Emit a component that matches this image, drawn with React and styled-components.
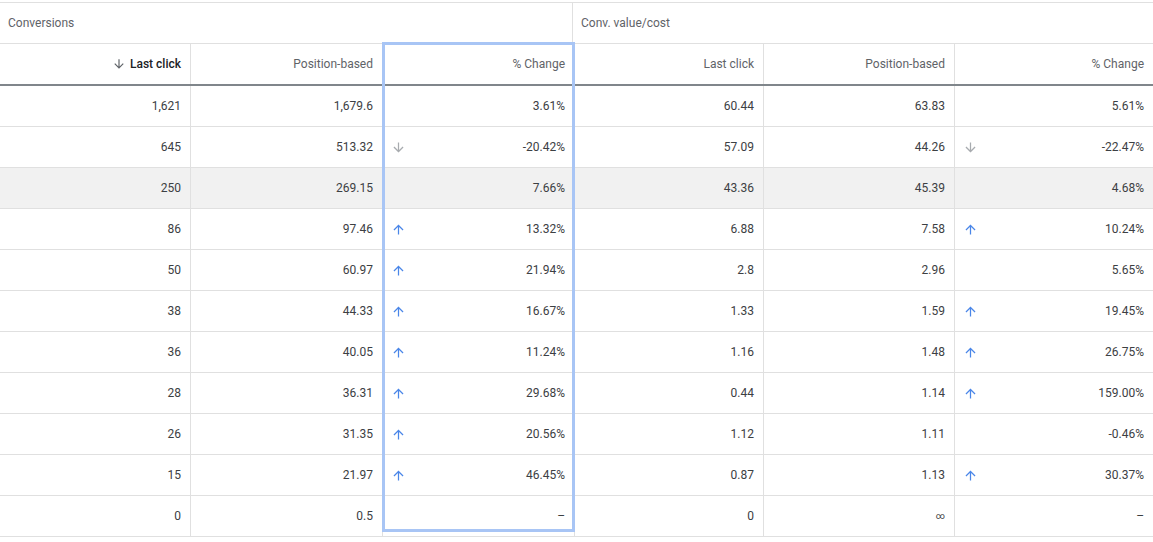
import React from 'react';
import styled, { createGlobalStyle } from 'styled-components';

const GlobalStyle = createGlobalStyle`
    html, body {
        margin: 0;
        padding: 0;
        background: #fff;
    }
    body {
        font-family: Roboto, "Liberation Sans", Arial, sans-serif;
        -webkit-font-smoothing: antialiased;
    }
`;

const COLUMNS = '191px 192px 192px 189px 191px 198px';

const Table = styled.div`
    position: relative;
    width: 1153px;
    padding-top: 2px;
`;

const GroupRow = styled.div`
    display: grid;
    grid-template-columns: 573px 1fr;
    border-top: 1px solid #e0e0e0;
    border-bottom: 1px solid #e0e0e0;
`;

const GroupCell = styled.div`
    height: 40px;
    display: flex;
    align-items: center;
    padding-left: 8px;
    font-size: 12px;
    color: #5f6368;
    border-right: ${p => p.$last ? 'none' : '1px solid #e0e0e0'};
`;

const HeaderRow = styled.div`
    display: grid;
    grid-template-columns: ${COLUMNS};
    border-bottom: 2px solid #80868b;
`;

const HeaderCell = styled.div`
    height: 40px;
    display: flex;
    align-items: center;
    justify-content: flex-end;
    gap: 4px;
    padding-right: 9px;
    font-size: 12px;
    color: ${p => p.$sorted ? '#202124' : '#5f6368'};
    font-weight: ${p => p.$sorted ? 500 : 400};
    border-right: ${p => p.$last ? 'none' : '1px solid #e0e0e0'};
`;

const Row = styled.div`
    display: grid;
    grid-template-columns: ${COLUMNS};
    border-bottom: 1px solid #e0e0e0;
    background: ${p => p.$hover ? '#f1f1f1' : '#fff'};
`;

const Cell = styled.div`
    height: 40px;
    display: flex;
    align-items: center;
    justify-content: ${p => p.$split ? 'space-between' : 'flex-end'};
    padding: 0 9px 0 ${p => p.$split ? '8px' : '0'};
    font-size: 12px;
    color: #3c4043;
    border-right: ${p => p.$last ? 'none' : '1px solid #e0e0e0'};
`;

const Infinity = styled.span`
    font-size: 9px;
`;

const Selection = styled.div`
    position: absolute;
    left: 382px;
    top: 42px;
    width: 193px;
    bottom: 5px;
    box-sizing: border-box;
    border: 3px solid #a8c5f5;
    pointer-events: none;
`;

const Page = styled.div`
    height: 542px;
    overflow: hidden;
`;

function Arrow({ dir, color, size = 15 }) {
    const d = dir === 'up'
        ? 'M4 12l1.41 1.41L11 7.83V20h2V7.83l5.58 5.59L20 12l-8-8-8 8z'
        : 'M20 12l-1.41-1.41L13 16.17V4h-2v12.17l-5.58-5.59L4 12l8 8 8-8z';
    return <svg width={size} height={size} viewBox="0 0 24 24"><path d={d} fill={color} /></svg>;
}

const trendIcon = (t) => {
    if (t === 'up') return <Arrow dir="up" color="#4a86e8" />;
    if (t === 'down') return <Arrow dir="down" color="#a8abaf" />;
    return <span />;
};

const rows = [
    ['1,621', '1,679.6', '3.61%', null, '60.44', '63.83', '5.61%', null],
    ['645', '513.32', '-20.42%', 'down', '57.09', '44.26', '-22.47%', 'down'],
    ['250', '269.15', '7.66%', null, '43.36', '45.39', '4.68%', null, true],
    ['86', '97.46', '13.32%', 'up', '6.88', '7.58', '10.24%', 'up'],
    ['50', '60.97', '21.94%', 'up', '2.8', '2.96', '5.65%', null],
    ['38', '44.33', '16.67%', 'up', '1.33', '1.59', '19.45%', 'up'],
    ['36', '40.05', '11.24%', 'up', '1.16', '1.48', '26.75%', 'up'],
    ['28', '36.31', '29.68%', 'up', '0.44', '1.14', '159.00%', 'up'],
    ['26', '31.35', '20.56%', 'up', '1.12', '1.11', '-0.46%', null],
    ['15', '21.97', '46.45%', 'up', '0.87', '1.13', '30.37%', 'up'],
    ['0', '0.5', '–', null, '0', '∞', '–', null],
];

export default function App() {
    return <Page>
        <GlobalStyle />
        <Table>
            <GroupRow>
                <GroupCell>Conversions</GroupCell>
                <GroupCell $last>Conv. value/cost</GroupCell>
            </GroupRow>
            <HeaderRow>
                <HeaderCell $sorted>
                    <Arrow dir="down" color="#5f6368" size={14} />
                    Last click
                </HeaderCell>
                <HeaderCell>Position-based</HeaderCell>
                <HeaderCell>% Change</HeaderCell>
                <HeaderCell>Last click</HeaderCell>
                <HeaderCell>Position-based</HeaderCell>
                <HeaderCell $last>% Change</HeaderCell>
            </HeaderRow>
            {rows.map((r, i) => (
                <Row key={i} $hover={r[8]}>
                    <Cell>{r[0]}</Cell>
                    <Cell>{r[1]}</Cell>
                    <Cell $split>{trendIcon(r[3])}<span>{r[2]}</span></Cell>
                    <Cell>{r[4]}</Cell>
                    <Cell>{r[5] === '∞' ? <Infinity>∞</Infinity> : r[5]}</Cell>
                    <Cell $split $last>{trendIcon(r[7])}<span>{r[6]}</span></Cell>
                </Row>
            ))}
            <Selection />
        </Table>
    </Page>;
}
